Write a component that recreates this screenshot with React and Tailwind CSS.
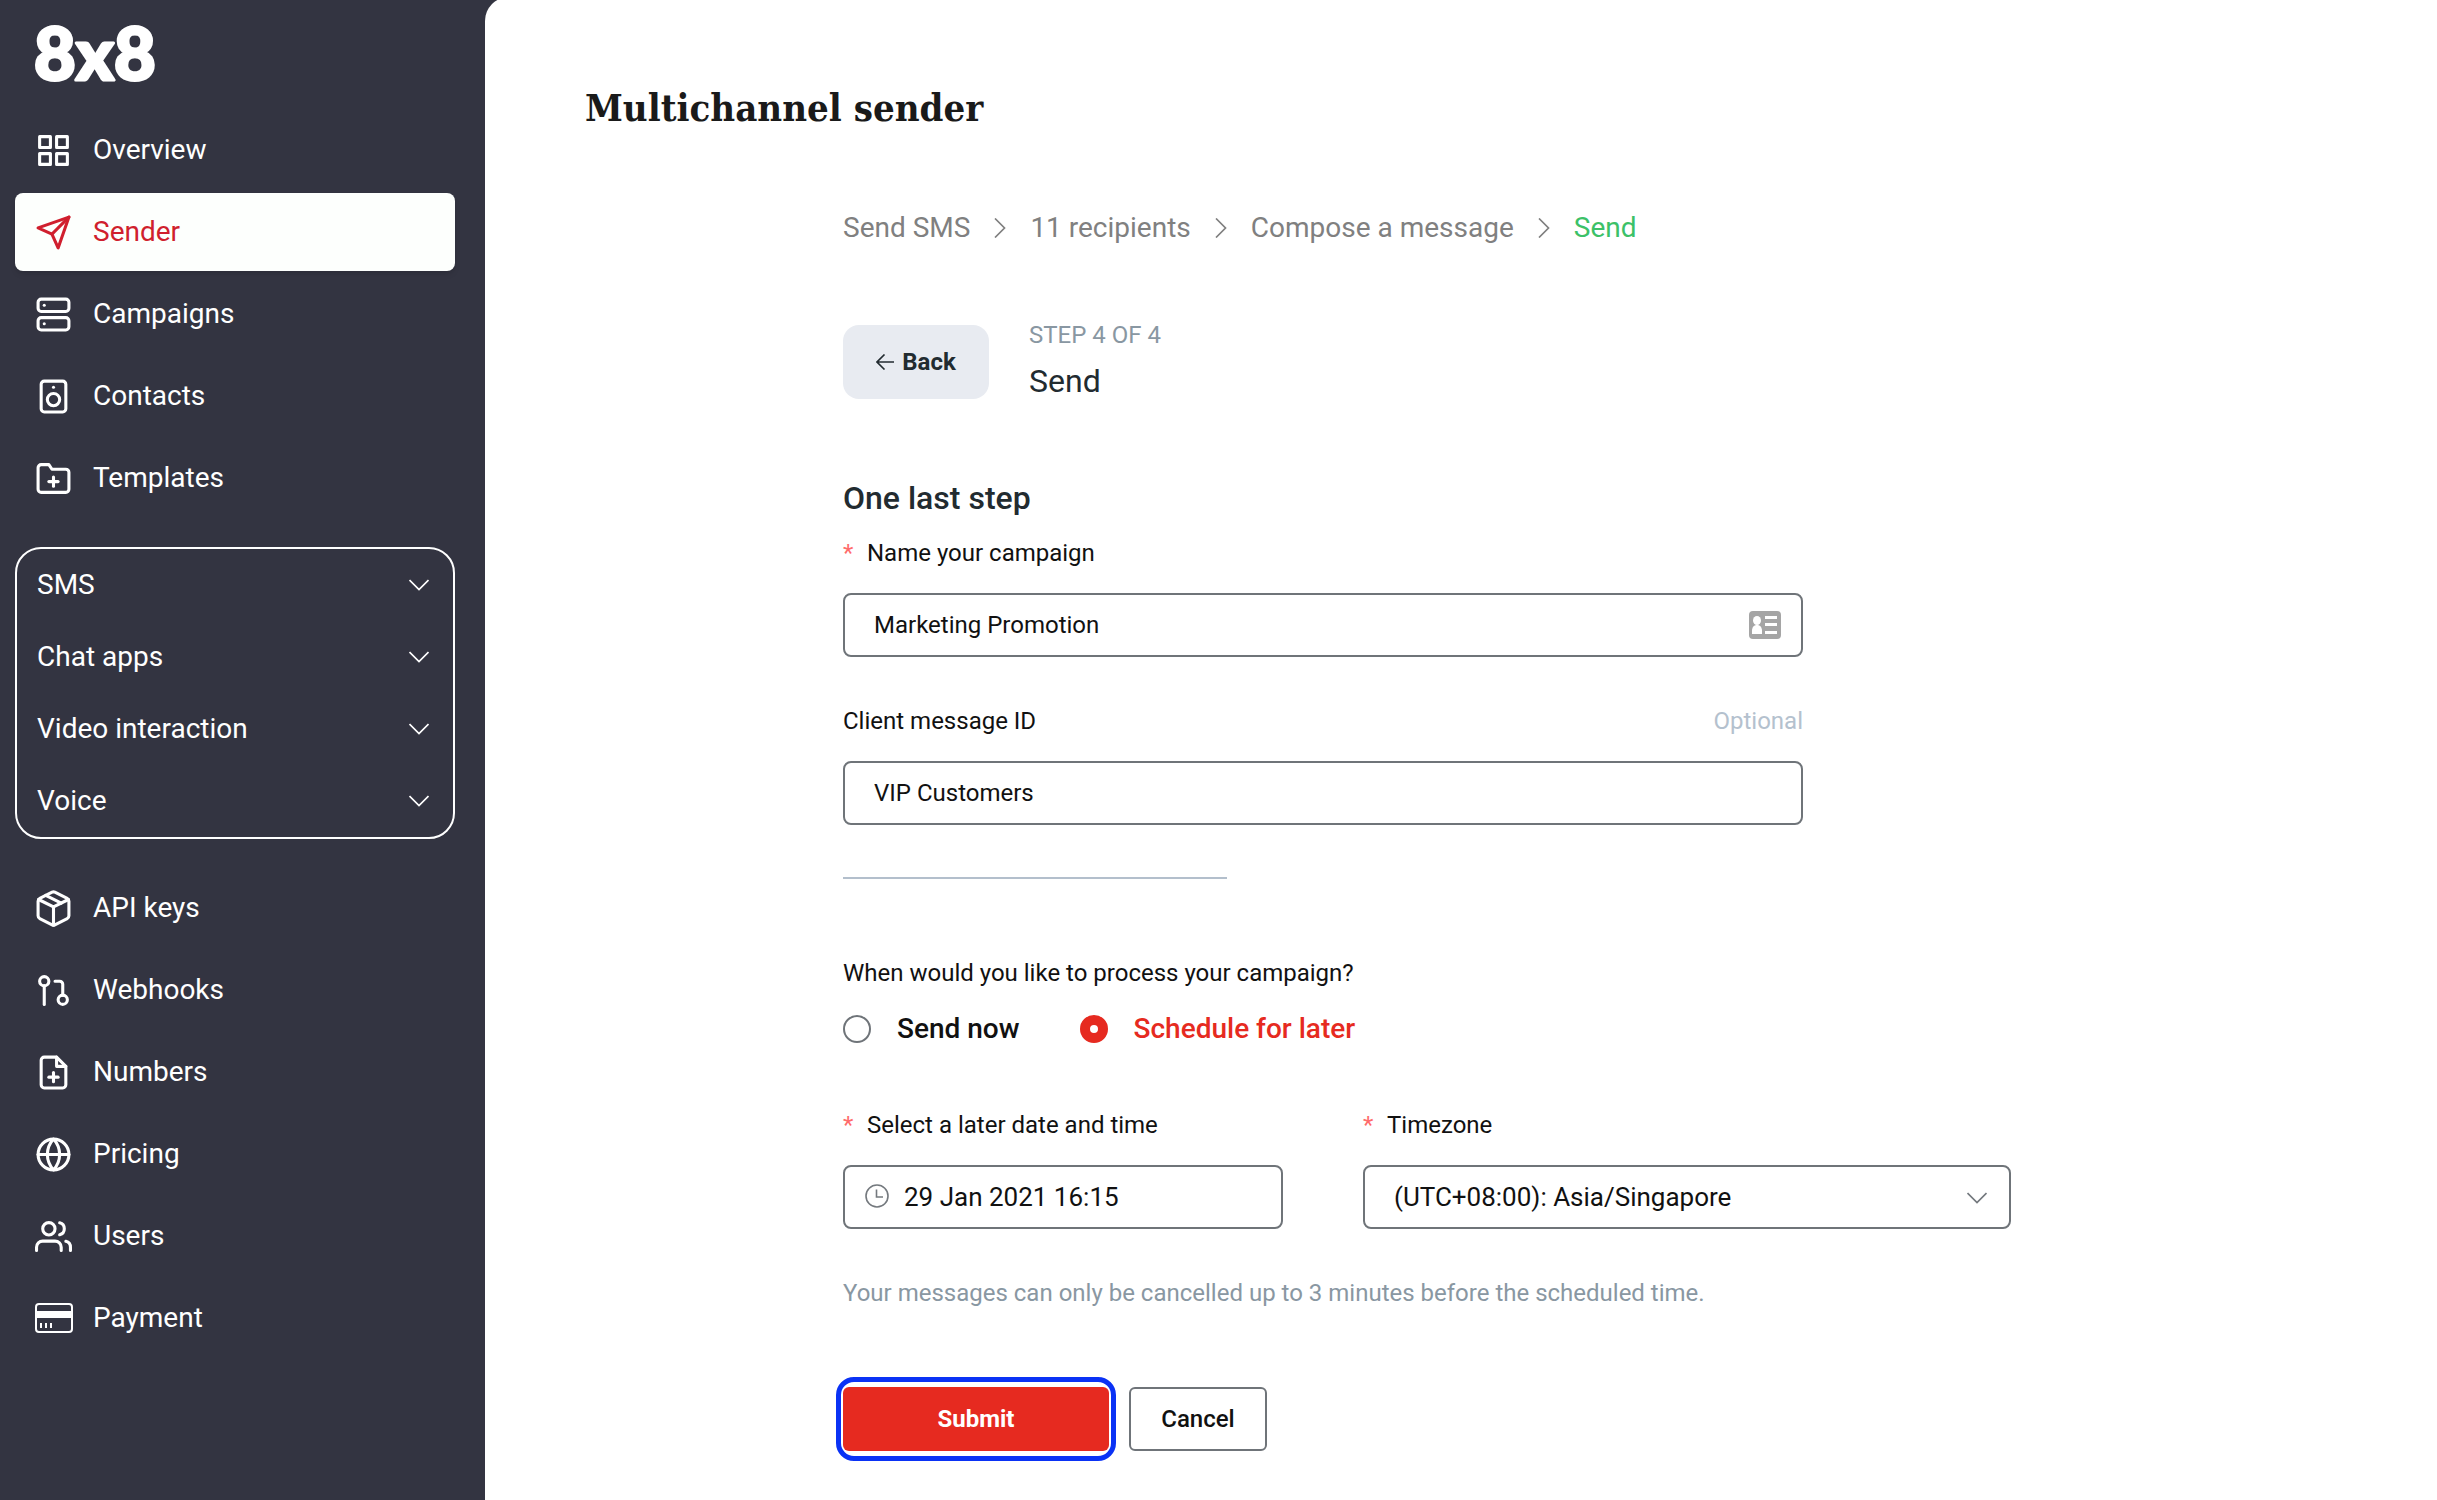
import React, { useState } from "react";

// Stroke icons share one 24x24 frame
const Icon = ({ children }) => (
  <svg
    viewBox="0 0 24 24"
    className="w-[37px] h-[37px] shrink-0"
    fill="none"
    stroke="currentColor"
    strokeWidth="2"
    strokeLinecap="round"
    strokeLinejoin="round"
    aria-hidden="true"
  >
    {children}
  </svg>
);

const mainLinks = [
  {
    label: "Overview",
    icon: (
      <Icon>
        <rect x="3" y="3" width="7" height="7" />
        <rect x="14" y="3" width="7" height="7" />
        <rect x="14" y="14" width="7" height="7" />
        <rect x="3" y="14" width="7" height="7" />
      </Icon>
    ),
  },
  {
    label: "Sender",
    active: true,
    icon: (
      <Icon>
        <line x1="22" y1="2" x2="11" y2="13" />
        <polygon points="22 2 15 22 11 13 2 9 22 2" />
      </Icon>
    ),
  },
  {
    label: "Campaigns",
    icon: (
      <Icon>
        <rect x="2" y="2" width="20" height="8" rx="2" />
        <rect x="2" y="14" width="20" height="8" rx="2" />
        <line x1="6" y1="6" x2="6" y2="6" />
        <line x1="6" y1="18" x2="6" y2="18" />
      </Icon>
    ),
  },
  {
    label: "Contacts",
    icon: (
      <Icon>
        <rect x="4" y="2" width="16" height="20" rx="2" />
        <circle cx="12" cy="14" r="4" />
        <line x1="12" y1="6" x2="12" y2="6" />
      </Icon>
    ),
  },
  {
    label: "Templates",
    icon: (
      <Icon>
        <path d="M22 19a2 2 0 0 1-2 2H4a2 2 0 0 1-2-2V5a2 2 0 0 1 2-2h5l2 3h9a2 2 0 0 1 2 2z" />
        <line x1="12" y1="11" x2="12" y2="17" />
        <line x1="9" y1="14" x2="15" y2="14" />
      </Icon>
    ),
  },
];

const accountLinks = [
  {
    label: "API keys",
    icon: (
      <Icon>
        <path d="M12.89 1.45l8 4A2 2 0 0 1 22 7.24v9.53a2 2 0 0 1-1.11 1.79l-8 4a2 2 0 0 1-1.79 0l-8-4a2 2 0 0 1-1.1-1.8V7.24a2 2 0 0 1 1.11-1.79l8-4a2 2 0 0 1 1.78 0z" />
        <polyline points="2.32 6.16 12 11 21.68 6.16" />
        <line x1="12" y1="22.76" x2="12" y2="11" />
        <line x1="7" y1="3.5" x2="17" y2="8.5" />
      </Icon>
    ),
  },
  {
    label: "Webhooks",
    icon: (
      <Icon>
        <circle cx="18" cy="18" r="3" />
        <circle cx="6" cy="6" r="3" />
        <path d="M13 6h3a2 2 0 0 1 2 2v7" />
        <line x1="6" y1="9" x2="6" y2="21" />
      </Icon>
    ),
  },
  {
    label: "Numbers",
    icon: (
      <Icon>
        <path d="M14 2H6a2 2 0 0 0-2 2v16a2 2 0 0 0 2 2h12a2 2 0 0 0 2-2V8z" />
        <polyline points="14 2 14 8 20 8" />
        <line x1="12" y1="12" x2="12" y2="18" />
        <line x1="9" y1="15" x2="15" y2="15" />
      </Icon>
    ),
  },
  {
    label: "Pricing",
    icon: (
      <Icon>
        <circle cx="12" cy="12" r="10" />
        <line x1="2" y1="12" x2="22" y2="12" />
        <path d="M12 2a15.3 15.3 0 0 1 4 10 15.3 15.3 0 0 1-4 10 15.3 15.3 0 0 1-4-10 15.3 15.3 0 0 1 4-10z" />
      </Icon>
    ),
  },
  {
    label: "Users",
    icon: (
      <Icon>
        <path d="M17 21v-2a4 4 0 0 0-4-4H5a4 4 0 0 0-4 4v2" />
        <circle cx="9" cy="7" r="4" />
        <path d="M23 21v-2a4 4 0 0 0-3-3.87" />
        <path d="M16 3.13a4 4 0 0 1 0 7.75" />
      </Icon>
    ),
  },
  {
    label: "Payment",
    icon: (
      <svg viewBox="0 0 38 30" className="w-[38px] h-[30px] shrink-0 -mr-px" fill="currentColor" aria-hidden="true">
        <rect x="1" y="1" width="36" height="28" rx="3" fill="none" stroke="currentColor" strokeWidth="2" />
        <rect x="2" y="8" width="34" height="7" />
        <rect x="5" y="20" width="2" height="5" />
        <rect x="10" y="20" width="2" height="5" />
        <rect x="15" y="20" width="2" height="5" />
      </svg>
    ),
  },
];

const products = ["SMS", "Chat apps", "Video interaction", "Voice"];
const steps = ["Send SMS", "11 recipients", "Compose a message", "Send"];

const NavLink = ({ link }) => (
  <a
    href="#"
    aria-current={link.active ? "page" : undefined}
    className={`flex items-center gap-[21px] h-[78px] px-5 rounded-lg ${
      link.active ? "bg-[#fdfffd] text-[#d01f2e] shadow-md" : "text-white"
    }`}
  >
    {link.icon}
    <span>{link.label}</span>
  </a>
);

const ChevronDown = ({ className }) => (
  <svg viewBox="0 0 20 12" className={`w-5 h-3 ${className}`} fill="none" stroke="currentColor" aria-hidden="true">
    <path d="M0.5 1L10 10.5L19.5 1" strokeWidth="1.7" />
  </svg>
);

const Required = () => <span className="w-6 text-[#ff6b6b]">*</span>;

const fieldClass =
  "w-full h-16 rounded-lg border-2 border-[#6f7479] bg-white text-[#111111] outline-none";

const Sidebar = () => (
  <aside className="w-[485px] shrink-0 pl-[15px] pr-[30px] pb-10 text-[28px] leading-10">
    <a href="#" aria-label="8x8 home" className="flex items-center h-[111px] pl-3 pb-1">
      <svg viewBox="0 0 150 100" className="w-[150px] h-[100px]" fill="white" stroke="white" strokeWidth="3" strokeLinejoin="round">
        <text x="7" y="76" className="font-['Lato',sans-serif] font-black text-[72px] leading-[80px]">
          8x8
        </text>
      </svg>
    </a>
    <nav className="flex flex-col gap-1">
      {mainLinks.map((link) => (
        <NavLink key={link.label} link={link} />
      ))}
    </nav>
    <div className="my-[30px] border-2 border-white rounded-[26px] text-white">
      {products.map((name) => (
        <button
          key={name}
          type="button"
          aria-expanded="false"
          className="flex items-center justify-between w-full h-[72px] pl-5 pr-6"
        >
          {name}
          <ChevronDown className="" />
        </button>
      ))}
    </div>
    <nav className="flex flex-col gap-1">
      {accountLinks.map((link) => (
        <NavLink key={link.label} link={link} />
      ))}
    </nav>
  </aside>
);

const Breadcrumb = () => (
  <nav aria-label="Steps" className="mt-[76px]">
    <ol className="flex items-center gap-6 text-[28px] leading-10 text-[#808080]">
      {steps.map((step, i) => (
        <React.Fragment key={step}>
          {i > 0 && (
            <li aria-hidden="true">
              <svg viewBox="0 0 12 20" className="w-3 h-5" fill="none" stroke="currentColor" strokeWidth="1.7">
                <path d="M1 0.5L10.5 10L1 19.5" />
              </svg>
            </li>
          )}
          <li className={i === steps.length - 1 ? "text-[#3cc168]" : ""}>{step}</li>
        </React.Fragment>
      ))}
    </ol>
  </nav>
);

const ScheduleOption = ({ value, label, selected, onSelect }) => (
  <label className={`flex items-center gap-[26px] ${selected ? "text-[#e62a20]" : "text-[#111111]"}`}>
    <input
      type="radio"
      name="schedule"
      value={value}
      checked={selected}
      onChange={() => onSelect(value)}
      className="appearance-none w-7 h-7 rounded-full bg-white border-2 border-[#6f7479] checked:border-[10px] checked:border-[#e62a20]"
    />
    {label}
  </label>
);

export default function App() {
  const [name, setName] = useState("Marketing Promotion");
  const [messageId, setMessageId] = useState("VIP Customers");
  const [schedule, setSchedule] = useState("later");
  const [date, setDate] = useState("29 Jan 2021 16:15");

  return (
    <div className="flex min-h-screen overflow-hidden bg-[#333441] font-['Roboto',sans-serif]">
      <Sidebar />
      <main className="flex-1 -mt-[3px] pt-[87px] pl-[100px] pr-10 pb-10 bg-white rounded-tl-3xl text-2xl leading-8 text-[#111111]">
        <h1 className="font-['DejaVu_Serif_Condensed','DejaVu_Serif',serif] font-bold text-[38px] leading-[48px] text-[#1a1a1a]">
          Multichannel sender
        </h1>

        <div className="ml-[258px] max-w-[1168px]">
          <Breadcrumb />

          <div className="flex items-center gap-10 mt-[71px]">
            <button
              type="button"
              className="flex items-center justify-center gap-2 w-[146px] h-[74px] rounded-2xl bg-[#e8ebf1] font-bold text-[#222b30]"
            >
              <svg viewBox="0 0 18 16" className="w-[18px] h-4" fill="none" stroke="currentColor" strokeWidth="1.6" aria-hidden="true">
                <path d="M18 8H1.5M8.5 0.5L1 8L8.5 15.5" />
              </svg>
              Back
            </button>
            <div>
              <p className="text-[#8997a2]">STEP 4 OF 4</p>
              <h2 className="mt-1.5 text-[32px] leading-[48px] text-[#222b30]">Send</h2>
            </div>
          </div>

          <form onSubmit={(e) => e.preventDefault()}>
            <h3 className="mt-[73px] text-[32px] leading-10 font-medium text-[#222b30]">One last step</h3>

            <div className="max-w-[960px]">
              <label htmlFor="name" className="flex mt-[19px]">
                <Required />
                Name your campaign
              </label>
              <div className="relative mt-6">
                <input
                  id="name"
                  type="text"
                  value={name}
                  onChange={(e) => setName(e.target.value)}
                  className={`${fieldClass} pl-[29px] pr-16`}
                />
                {/* contact card */}
                <svg viewBox="0 0 32 28" className="absolute right-[22px] top-[18px] w-8 h-7" aria-hidden="true">
                  <rect width="32" height="28" rx="4" fill="#a5a5a5" />
                  <g fill="white">
                    <ellipse cx="8" cy="9.5" rx="4" ry="4.5" />
                    <path d="M3 23v-3c0-4 2-6 5-6s5 2 5 6v3z" />
                    <rect x="16" y="5" width="12" height="3" />
                    <rect x="16" y="12" width="12" height="3" />
                    <rect x="16" y="20" width="12" height="3" />
                  </g>
                </svg>
              </div>

              <div className="flex justify-between mt-12">
                <label htmlFor="message-id">Client message ID</label>
                <span className="text-[#b4c1ce]">Optional</span>
              </div>
              <input
                id="message-id"
                type="text"
                value={messageId}
                onChange={(e) => setMessageId(e.target.value)}
                className={`${fieldClass} block mt-6 px-[29px]`}
              />
            </div>

            <hr className="mt-[52px] w-[384px] border-t-2 border-[#b3bfcc]" />

            <fieldset className="mt-[78px]">
              <legend>When would you like to process your campaign?</legend>
              <div className="flex gap-[60px] mt-5 text-[28px] leading-10 font-medium">
                <ScheduleOption value="now" label="Send now" selected={schedule === "now"} onSelect={setSchedule} />
                <ScheduleOption
                  value="later"
                  label="Schedule for later"
                  selected={schedule === "later"}
                  onSelect={setSchedule}
                />
              </div>
            </fieldset>

            <div className="flex gap-20 mt-[60px]">
              <div className="w-[440px]">
                <label htmlFor="date" className="flex">
                  <Required />
                  Select a later date and time
                </label>
                <div className="relative mt-6 text-[26px]">
                  <svg
                    viewBox="0 0 24 24"
                    className="absolute left-[22px] top-[19px] w-6 h-6 text-[#74797e]"
                    fill="none"
                    stroke="currentColor"
                    strokeWidth="1.6"
                    aria-hidden="true"
                  >
                    <circle cx="12" cy="12" r="11" />
                    <path d="M11.5 5.5V13H18" />
                  </svg>
                  <input
                    id="date"
                    type="text"
                    value={date}
                    onChange={(e) => setDate(e.target.value)}
                    className={`${fieldClass} pl-[59px] pr-6`}
                  />
                </div>
              </div>

              <div className="flex-1">
                <label htmlFor="timezone" className="flex">
                  <Required />
                  Timezone
                </label>
                <div className="relative mt-6 text-[26px]">
                  <select id="timezone" className={`${fieldClass} appearance-none pl-[29px] pr-16`}>
                    <option>(UTC+08:00): Asia/Singapore</option>
                  </select>
                  <ChevronDown className="absolute right-6 top-[27px] text-[#74797e] pointer-events-none" />
                </div>
              </div>
            </div>

            <p className="mt-12 text-[#8997a2]">
              Your messages can only be cancelled up to 3 minutes before the scheduled time.
            </p>

            <div className="flex items-center gap-[13px] mt-[68px] -ml-[7px]">
              {/* focus ring around the primary action */}
              <div className="px-[2px] py-[5px] border-[5px] border-[#0a32f5] rounded-[18px]">
                <button type="submit" className="block w-[266px] h-16 rounded-md bg-[#e62a20] text-white font-bold">
                  Submit
                </button>
              </div>
              <button type="button" className="w-[138px] h-16 rounded-md border-2 border-[#6f7479] bg-white font-medium">
                Cancel
              </button>
            </div>
          </form>
        </div>
      </main>
    </div>
  );
}
